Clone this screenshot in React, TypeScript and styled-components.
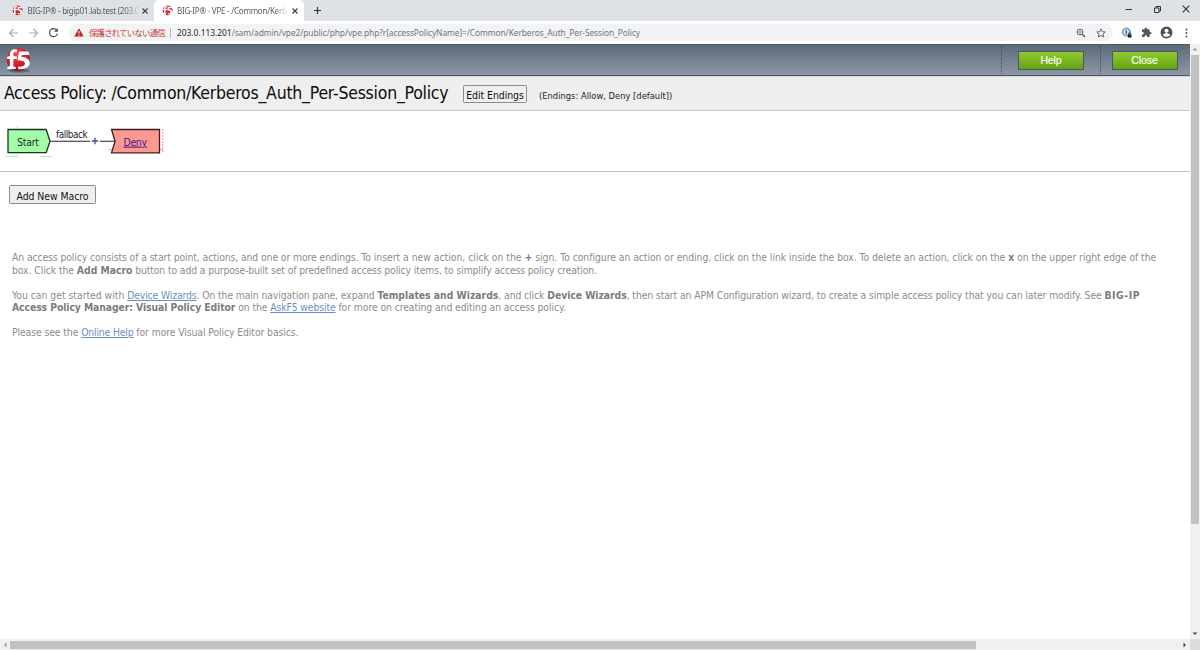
import React from "react";
import styled, { createGlobalStyle } from "styled-components";

const GlobalStyle = createGlobalStyle`
  * { box-sizing: border-box; }
  html, body { margin: 0; padding: 0; overflow: hidden; background: #fff; }
`;

const TAHOMA = `"DejaVu Sans Condensed", "DejaVu Sans", sans-serif`;
const CHROME = `"Noto Sans", "Open Sans", "Noto Sans CJK JP", sans-serif`;

const Window = styled.div`
  width: 1200px;
  height: 650px;
  display: flex;
  flex-direction: column;
  overflow: hidden;
  background: #fff;
  font-family: ${TAHOMA};
  color: #111;
`;

const TabStrip = styled.div`
  display: flex;
  height: 21px;
  background: #dee1e6;
  flex: none;
`;

const Tab = styled.div<{ $active?: boolean }>`
  display: flex;
  align-items: center;
  width: ${(p) => (p.$active ? 150 : 154)}px;
  height: 21px;
  padding-left: ${(p) => (p.$active ? 7.5 : 12)}px;
  border-radius: 5px 5px 0 0;
  background: ${(p) => (p.$active ? "#fff" : "transparent")};
`;

const TabTitle = styled.div<{ $spacing: number }>`
  width: 110px;
  margin: 1px 4.5px 0 4.5px;
  white-space: nowrap;
  font: 8px/14px ${CHROME};
  letter-spacing: ${(p) => p.$spacing}px;
  color: #55595e;
  mask-image: linear-gradient(to right, #000 88%, transparent 102%);
`;

const NewTab = styled.div`
  display: flex;
  align-items: center;
  padding-left: 9px;
  flex: 1;
`;

const WindowButtons = styled.div`
  display: flex;
  align-items: center;
  gap: 20px;
  padding: 0 10.5px 3px 0;
`;

const Toolbar = styled.div`
  display: flex;
  align-items: center;
  height: 23px;
  flex: none;
  background: #fff;
`;

const NavButtons = styled.div`
  display: flex;
  align-items: center;
  gap: 9px;
  width: 68px;
  padding-left: 8px;
`;

const AddressBar = styled.div`
  display: flex;
  align-items: center;
  width: 1045px;
  height: 17px;
  padding: 0 7px 0 6px;
  border-radius: 9px;
  background: #f1f3f4;
  font: 8.4px/16px ${CHROME};
  white-space: nowrap;
`;

const Insecure = styled.span`
  width: 76px;
  margin: -1px 0 0 5px;
  font-family: "Noto Sans CJK JP", sans-serif;
  font-size: 8.4px;
  letter-spacing: -0.75px;
  color: #c8382e;
`;

const Divider = styled.span`
  width: 1px;
  height: 10px;
  margin: 0 6px 0 5px;
  background: #b4b7bb;
`;

const Url = styled.span`
  flex: 1;
  color: #72767a;
  letter-spacing: -0.08px;
`;

const Host = styled.span`
  color: #25282b;
  letter-spacing: 0;
`;

const AddressIcons = styled.div`
  display: flex;
  align-items: center;
  gap: 10px;
`;

const ToolIcons = styled.div`
  display: flex;
  align-items: center;
  gap: 8.5px;
  padding-left: 8px;
`;

const Viewport = styled.div`
  display: grid;
  grid-template-columns: 1190px 10px;
  grid-template-rows: 595px 11px;
  flex: 1;
`;

const Page = styled.div`
  overflow: hidden;
  background: #fff;
`;

const Header = styled.header`
  display: flex;
  align-items: center;
  height: 32px;
  padding: 0 12.5px 0 5px;
  border-top: 1px solid #4c5966;
  border-bottom: 1px solid #4d5663;
  background:
    repeating-linear-gradient(135deg, rgba(255, 255, 255, 0.04) 0 1.4px, rgba(0, 0, 0, 0.02) 1.4px 2.83px),
    linear-gradient(to bottom, #5a6877, #8b98a6);
`;

const HeaderSpace = styled.div<{ $fixed?: number }>`
  flex: ${(p) => (p.$fixed ? `0 0 ${p.$fixed}px` : "1")};
`;

const Dots = styled.div<{ $after: number }>`
  width: 0;
  height: 28px;
  border-left: 1px dotted #414c58;
  margin-right: ${(p) => p.$after}px;
`;

const GreenButton = styled.button`
  width: 66px;
  height: 19px;
  padding: 1px 0 0;
  border: 1px solid #4d5663;
  background: linear-gradient(to bottom, #90c931, #63a411);
  color: #f6fbea;
  font: 10.5px/15px "Liberation Sans", sans-serif;
  letter-spacing: -0.1px;
  -webkit-text-stroke: 0.2px #f6fbea;
`;

const TitleBar = styled.div`
  display: flex;
  height: 35px;
  padding: 0 0 0 4px;
  border-top: 1px solid #d5d8db;
  border-bottom: 1px solid #c9c9c9;
  background: #efefef;
`;

const Title = styled.h1`
  width: 459px;
  margin: 0;
  padding-top: 5px;
  font: 400 17.5px/22px ${TAHOMA};
  white-space: nowrap;
  color: #0c0c0c;
`;

const GreyButton = styled.button<{ $width: number; $height: number; $spacing?: number }>`
  width: ${(p) => p.$width}px;
  height: ${(p) => p.$height}px;
  padding: 2px 0 0;
  border: 1px solid #8b8b8b;
  border-radius: 1.5px;
  background: #efefef;
  color: #111;
  font: 10.4px/14px ${TAHOMA};
  letter-spacing: ${(p) => p.$spacing ?? 0}px;
  white-space: nowrap;
`;

const EndingsButton = styled(GreyButton)`
  margin: 8px 12px 0 0;
`;

const EndingsText = styled.span`
  padding-top: 12px;
  font-size: 9.3px;
  line-height: 14px;
  color: #222;
  white-space: nowrap;
`;

const FlowArea = styled.div`
  height: 61px;
  border-bottom: 1px solid #c4c4c4;
`;

const MacroArea = styled.div`
  display: flex;
  align-items: flex-start;
  padding: 13px 0 0 9px;
  height: 79.4px;
`;

const HelpText = styled.div`
  padding-left: 12px;
  color: #8c8c8c;
  font-size: 10.3px;
  line-height: 12.4px;
`;

const Paragraph = styled.div`
  margin-bottom: 12.6px;
`;

const Line = styled.div`
  white-space: nowrap;
`;

const Run = styled.span<{ $spacing: number }>`
  letter-spacing: ${(p) => p.$spacing}px;
`;

const Strong = styled.b<{ $spacing?: number }>`
  color: #7c7c7c;
  letter-spacing: ${(p) => p.$spacing ?? 0}px;
`;

const Link = styled.a<{ $spacing?: number }>`
  color: #6a8fc0;
  text-decoration: underline;
  letter-spacing: ${(p) => p.$spacing ?? 0}px;
`;

const VScroll = styled.div`
  display: flex;
  flex-direction: column;
  align-items: center;
  background: #f0f0f0;
`;

const HScroll = styled.div`
  display: flex;
  align-items: center;
  background: #f0f0f0;
`;

const VThumb = styled.div`
  width: 8px;
  height: 469px;
  margin: 1px 0 auto;
  background: #c1c1c1;
`;

const HThumb = styled.div`
  width: 966px;
  height: 8px;
  margin-right: auto;
  background: #c1c1c1;
`;

const ScrollCorner = styled.div`
  background: #dcdcdc;
`;

const F5Logo = ({ size, shadow }: { size: number; shadow?: boolean }) => (
  <svg width={size} height={size} viewBox="0 0 26 26">
    <defs>
      <radialGradient id="ball" cx="0.45" cy="0.3" r="0.7">
        <stop offset="0" stopColor="#ee4a50" />
        <stop offset="0.6" stopColor="#cf1f2b" />
        <stop offset="1" stopColor="#96101b" />
      </radialGradient>
    </defs>
    {shadow && <ellipse cx="14" cy="23.6" rx="10.5" ry="1.9" fill="#4b5561" opacity="0.7" />}
    <circle cx="13.3" cy="12.6" r="11.6" fill="url(#ball)" />
    <g fill="#fff" transform="translate(-1.6 -1.3) scale(1.1)">
      <path d="M12.6 3.600C9.200 2.200 6 4.200 5.900 8v1.400L3.400 10v2.100h2.400v6.600L3.600 19.400v1.800h7.600v-1.800l-2.100-.6v-6.700h3.100V9.700H9.100V7.800c0-1.800 1.200-2.200 3-1.400z" />
      <path d="M14.200 5.200h8.400l1.200 3.200h-7.200l-.3 1.800c5.200.2 8 2.500 7.700 5.800-.4 3.900-4.800 6-10.400 5.200l-.5-2.200c3.700.3 6.300-.5 6.500-2.600.2-2.200-2.900-3.200-6.900-3.200z" />
    </g>
  </svg>
);

const CloseX = ({ size = 6, color = "#3f4246", width = 1.2 }) => (
  <svg width={size} height={size} viewBox="0 0 6 6">
    <path d="M.5.5l5 5M5.500.5l-5 5" stroke={color} strokeWidth={width} />
  </svg>
);

const Arrow = ({ back }: { back?: boolean }) => (
  <svg width="11" height="10" viewBox="0 0 11 10" fill="none" stroke="#a9abae" strokeWidth="1.1">
    <path d={back ? "M10 5H1.500M5.500 1L1.500 5l4 4" : "M1 5h8.500M5.500 1l4 4-4 4"} />
  </svg>
);

const ScrollArrow = ({ points, dark }: { points: string; dark?: boolean }) => (
  <svg width="10" height="10" viewBox="0 0 10 10">
    <polygon points={points} fill={dark ? "#4d4d4d" : "#9a9a9a"} />
  </svg>
);

const PolicyFlow = () => (
  <svg width="180" height="60" viewBox="0 111 180 60" fontFamily={TAHOMA} fontSize="10.4">
    <path d="M17.500 125.500v4M5 156.500h13M17.500 153.500v3M39.500 156.500h13" stroke="#a9f7ae" fill="none" />
    <path d="M162.800 129v24" stroke="#dc8f8f" strokeDasharray="2 1" />
    <path d="M159 149.500h4M109 149.500h4" stroke="#f9a5a5" />
    <path d="M8 129.500h38.200l3.800 11.700-3.800 11.500H8z" fill="#a2fda9" stroke="#1d321f" strokeWidth="1.3" />
    <path d="M111.500 129.500h48v23.300h-48l3.600-11.600z" fill="#ff9892" stroke="#35201f" strokeWidth="1.300" />
    <path d="M50 141.300h40M100 141.300h15" stroke="#222" strokeWidth="1.1" />
    <path d="M91.700 141h6.600M95 137.700v6.600" stroke="#3c4eae" strokeWidth="1.300" />
    <text x="17" y="145.600" fill="#16301a" textLength="22">Start</text>
    <text x="56" y="137.500" fill="#222" fontSize="9.800" textLength="31.500">fallback</text>
    <text x="123.500" y="145.600" fill="#3a1c84" textLength="23.500" textDecoration="underline">Deny</text>
  </svg>
);

export default function App() {
  return (
    <Window>
      <GlobalStyle />
      <TabStrip>
        <Tab>
          <F5Logo size={11} />
          <TabTitle $spacing={-0.26}>BIG-IP® - bigip01.lab.test (203.0.</TabTitle>
          <CloseX />
        </Tab>
        <Tab $active>
          <F5Logo size={11} />
          <TabTitle $spacing={-0.24}>BIG-IP® - VPE - /Common/Kerbe</TabTitle>
          <CloseX />
        </Tab>
        <NewTab>
          <svg width="9" height="9" viewBox="0 0 9 9">
            <path d="M4.500 1v7M1 4.500h7" stroke="#333" strokeWidth="1.2" />
          </svg>
        </NewTab>
        <WindowButtons>
          <svg width="8" height="8" viewBox="0 0 8 8">
            <path d="M.5 4.500h6.500" stroke="#333" />
          </svg>
          <svg width="9" height="9" viewBox="0 0 9 9" fill="none" stroke="#333">
            <path d="M1.500 3h4.500v4.500h-4.500zM3 3V1.500h4.500v4.500H6" />
          </svg>
          <CloseX size={8} width={0.8} color="#333" />
        </WindowButtons>
      </TabStrip>

      <Toolbar>
        <NavButtons>
          <Arrow back />
          <Arrow />
          <svg width="11" height="11" viewBox="0 0 11 11">
            <path d="M9 3.600A4 4 0 1 0 9.500 6.500" fill="none" stroke="#4a4d51" strokeWidth="1.200" />
            <path d="M9.800 1v3.700H6z" fill="#4a4d51" />
          </svg>
        </NavButtons>
        <AddressBar>
          <svg width="10" height="9" viewBox="0 0 10 9">
            <path d="M5 .3L9.700 8.600H.3z" fill="#c5221f" />
            <path d="M5 3v2.700M5 6.500v1.100" stroke="#fff" />
          </svg>
          <Insecure>保護されていない通信</Insecure>
          <Divider />
          <Url>
            <Host>203.0.113.201</Host>
            /sam/admin/vpe2/public/php/vpe.php?r[accessPolicyName]=/Common/Kerberos_Auth_Per-Session_Policy
          </Url>
          <AddressIcons>
            <svg width="10" height="10" viewBox="0 0 10 10" fill="none" stroke="#55585c">
              <circle cx="4" cy="4" r="2.900" />
              <path d="M6.200 6.200L9 9" strokeWidth="1.300" />
              <path d="M2.500 4h3M4 2.500v3" strokeWidth=".7" />
            </svg>
            <svg width="10" height="10" viewBox="0 0 10 10" fill="none" stroke="#55585c" strokeWidth=".9">
              <path d="M5 .9l1.200 2.800 3.100.3-2.300 2 .7 3L5 7.400 2.300 9l.7-3L.7 4l3.100-.3z" />
            </svg>
          </AddressIcons>
        </AddressBar>
        <ToolIcons>
          <svg width="11" height="11" viewBox="0 0 11 11">
            <circle cx="5.300" cy="5" r="4.200" fill="#e6f1fa" stroke="#8b9299" strokeWidth=".8" />
            <circle cx="5.300" cy="5" r="3.200" fill="none" stroke="#4a9be0" strokeWidth="1.100" />
            <path d="M5.300 3.300v3.400" stroke="#333" strokeWidth="1.200" />
            <path d="M6.800 7.400h3.700v3.200H6.800z" fill="#222" />
            <path d="M7.500 7.500V6.800a1.100 1.100 0 0 1 2.200 0v.7" fill="none" stroke="#222" strokeWidth=".8" />
          </svg>
          <svg width="11" height="11" viewBox="0 0 24 24" fill="#55585d">
            <path d="M20.500 11H19V7c0-1.100-.9-2-2-2h-4V3.500a2.500 2.500 0 0 0-5 0V5H4c-1.100 0-2 .9-2 2v3.800h1.500a2.700 2.700 0 0 1 0 5.400H2V20c0 1.100.9 2 2 2h3.800v-1.500a2.700 2.700 0 0 1 5.400 0V22H17c1.100 0 2-.9 2-2v-4h1.500a2.500 2.500 0 0 0 0-5z" />
          </svg>
          <svg width="13" height="13" viewBox="0 0 24 24" fill="#4d5156">
            <path d="M12 1a11 11 0 1 0 0 22 11 11 0 0 0 0-22zm0 4a3.800 3.800 0 1 1 0 7.600A3.800 3.800 0 0 1 12 5zm0 15a8 8 0 0 1-6.600-3.500c.1-2.100 4.400-3.200 6.600-3.200s6.500 1.100 6.600 3.200A8 8 0 0 1 12 20z" />
          </svg>
          <svg width="10" height="10" viewBox="0 0 10 10" fill="#44474b">
            <circle cx="4.500" cy="1.500" r=".9" />
            <circle cx="4.500" cy="5" r=".9" />
            <circle cx="4.500" cy="8.500" r=".9" />
          </svg>
        </ToolIcons>
      </Toolbar>

      <Viewport>
        <Page>
          <Header>
            <F5Logo size={26} shadow />
            <HeaderSpace />
            <Dots $after={16} />
            <GreenButton>Help</GreenButton>
            <HeaderSpace $fixed={15.5} />
            <Dots $after={11} />
            <GreenButton>Close</GreenButton>
          </Header>
          <TitleBar>
            <Title>
              <Run $spacing={-0.38}>Access Policy: </Run>
              <Run $spacing={-0.23}>/Common/Kerberos_Auth_Per-Session_Policy</Run>
            </Title>
            <EndingsButton $width={64} $height={18} $spacing={-0.05}>Edit Endings</EndingsButton>
            <EndingsText>(Endings: Allow, Deny [default])</EndingsText>
          </TitleBar>
          <FlowArea>
            <PolicyFlow />
          </FlowArea>
          <MacroArea>
            <GreyButton $width={87} $height={19} $spacing={-0.05}>Add New Macro</GreyButton>
          </MacroArea>
          <HelpText>
            <Paragraph>
              <Line>
                <Run $spacing={-0.085}>An access policy consists of a start point, actions, and one or more endings. </Run>
                To insert a new action, click on the <Strong>+</Strong> sign.{" "}
                <Run $spacing={-0.035}>To configure an action or ending, click on the link inside the box. To delete an action, click on the </Run>
                <Strong>x</Strong>
                <Run $spacing={-0.05}> on the upper right edge of the</Run>
              </Line>
              <Line>
                <Run $spacing={-0.06}>box. Click the </Run>
                <Strong>Add Macro</Strong>
                <Run $spacing={-0.113}> button to add a purpose-built set of predefined access policy items, to simplify access policy creation.</Run>
              </Line>
            </Paragraph>
            <Paragraph>
              <Line>
                You can get started with <Link $spacing={-0.12}>Device Wizards</Link>
                <Run $spacing={-0.09}>. On the main navigation pane, expand </Run>
                <Strong>Templates and Wizards</Strong>
                <Run $spacing={-0.08}>, and click </Run>
                <Strong $spacing={-0.04}>Device Wizards</Strong>
                <Run $spacing={-0.083}>, then start an APM Configuration wizard, to create a simple access policy that you can later modify. See </Run>
                <Strong $spacing={0.55}>BIG-IP</Strong>
              </Line>
              <Line>
                <Strong $spacing={-0.07}>Access Policy Manager: Visual Policy Editor</Strong>
                <Run $spacing={-0.08}> on the </Run>
                <Link $spacing={-0.1}>AskF5 website</Link>
                <Run $spacing={-0.07}> for more on creating and editing an access policy.</Run>
              </Line>
            </Paragraph>
            <Paragraph>
              <Line>
                <Run $spacing={-0.08}>Please see the </Run>
                <Link $spacing={-0.15}>Online Help</Link>
                <Run $spacing={-0.075}> for more Visual Policy Editor basics.</Run>
              </Line>
            </Paragraph>
          </HelpText>
        </Page>
        <VScroll>
          <ScrollArrow points="2.500,6.500 7.500,6.500 5,4" />
          <VThumb />
          <ScrollArrow dark points="2.500,3.500 7.500,3.500 5,6" />
        </VScroll>
        <HScroll>
          <ScrollArrow points="6.500,2.500 6.500,7.500 4,5" />
          <HThumb />
          <ScrollArrow dark points="3.500,2.500 3.500,7.500 6,5" />
        </HScroll>
        <ScrollCorner />
      </Viewport>
    </Window>
  );
}
